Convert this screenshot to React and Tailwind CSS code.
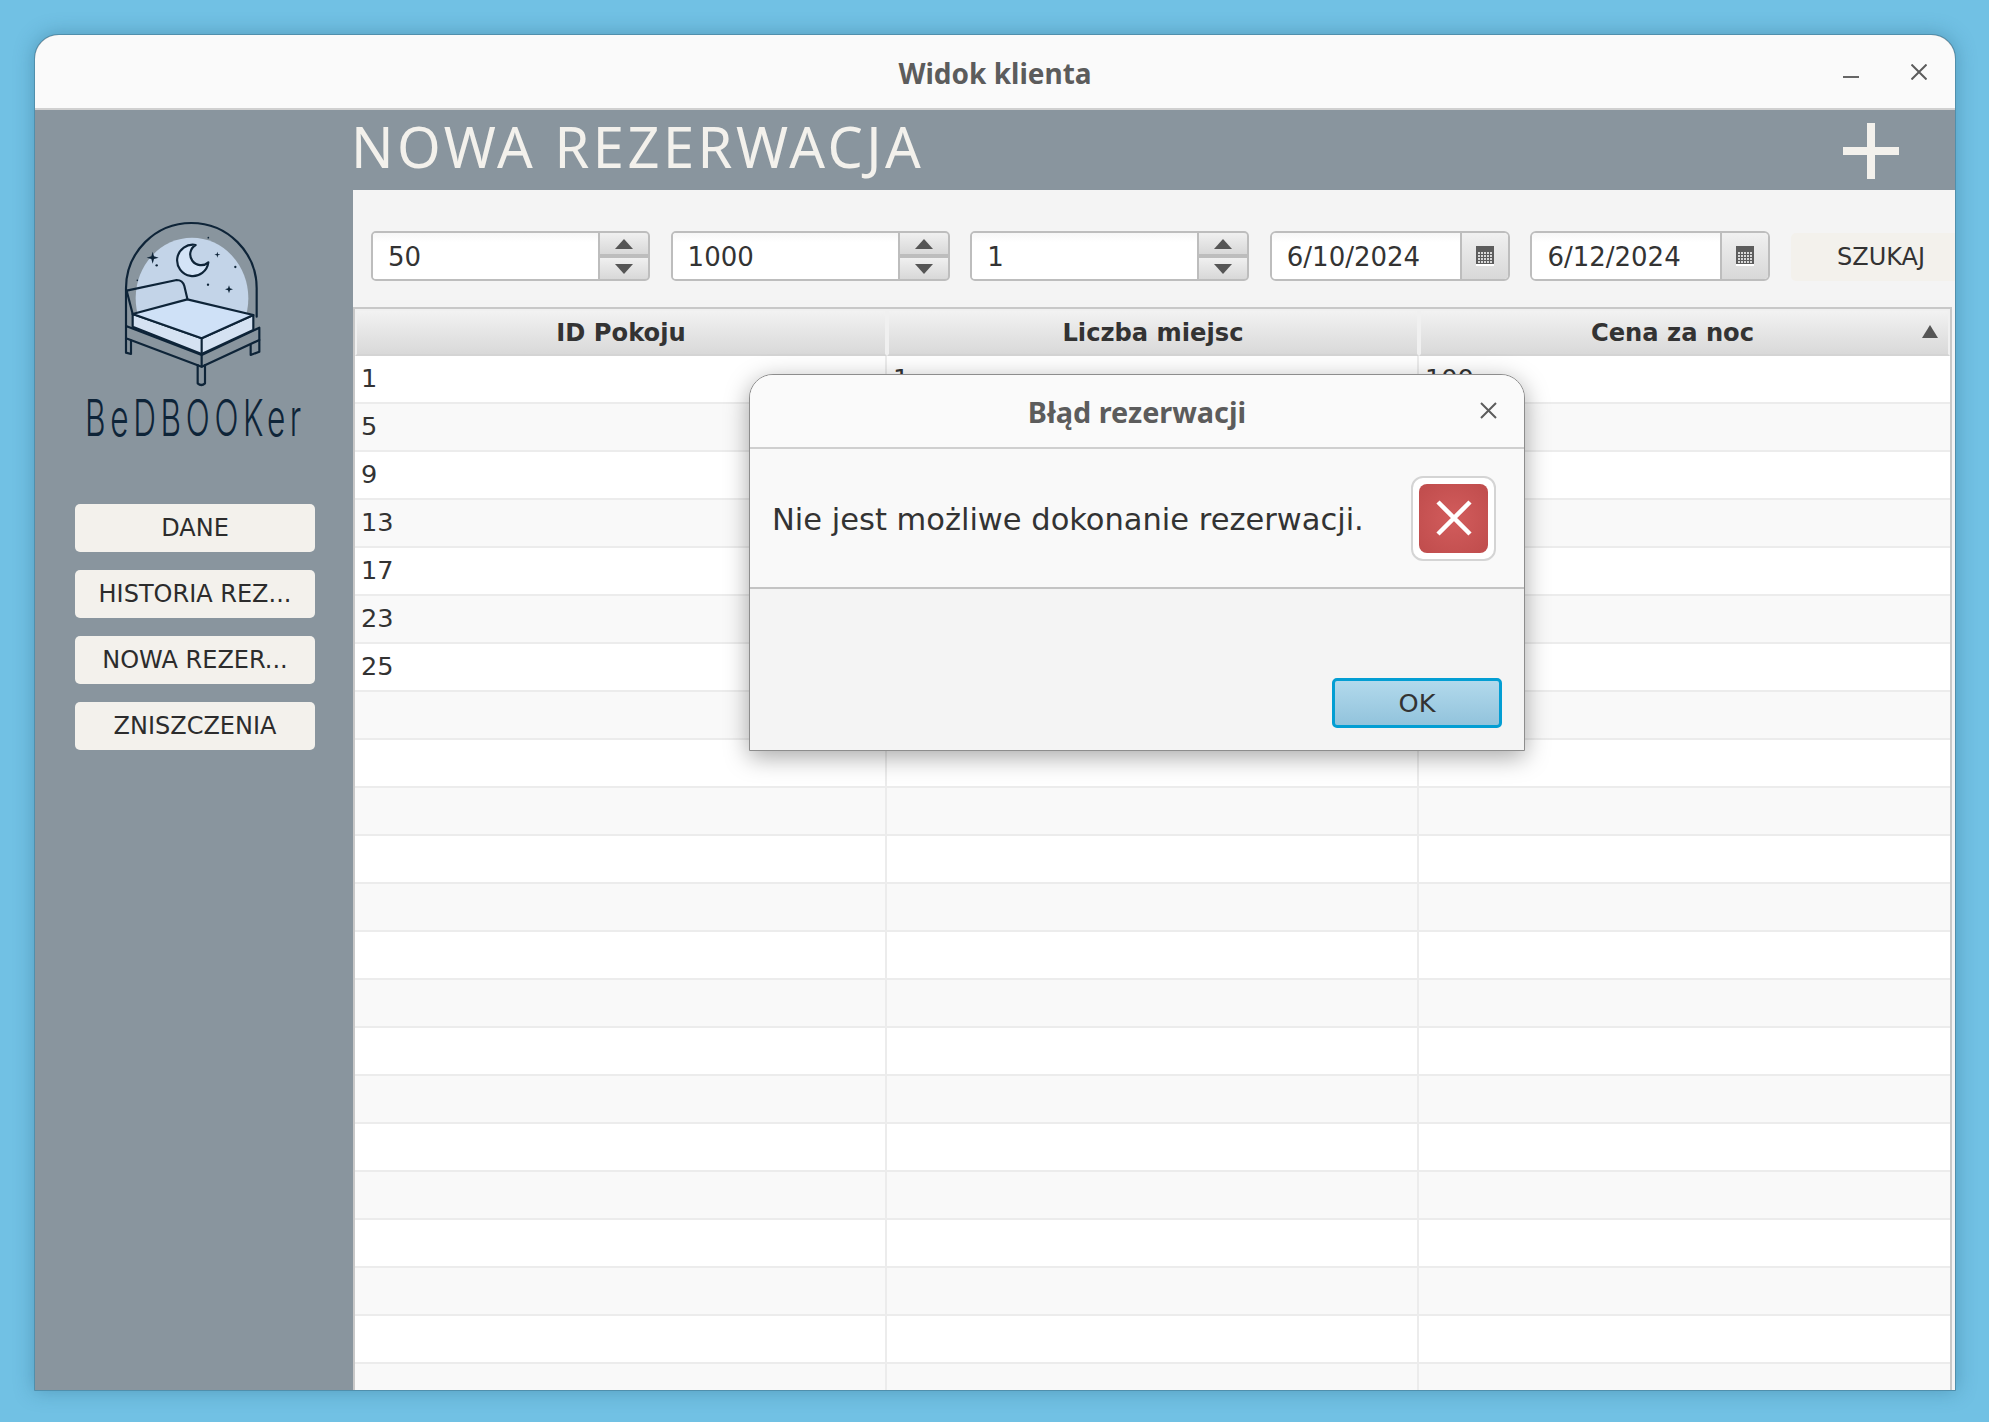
import React from "react";

const menu = ["DANE", "HISTORIA REZ...", "NOWA REZER...", "ZNISZCZENIA"];
const rows = Array.from({ length: 22 }, (_, i) => i);
const ids = ["1", "5", "9", "13", "17", "23", "25"];
const spinners = ["50", "1000", "1"];
const dates = ["6/10/2024", "6/12/2024"];

function Logo() {
    return (
        <svg width="240" height="178" viewBox="135 555 720 534" className="block" fill="none" stroke="#0e2438" strokeWidth="6.5" strokeLinejoin="round" strokeLinecap="round">
            <ellipse cx="486" cy="805" rx="169" ry="182" fill="#c3d4e8" stroke="none" />
            <path d="M288 888 L288 775 A196 196 0 0 1 680 775 L680 860" />
            <path d="M290 782 L440 750 Q458 750 463 768 L472 806" />
            <path d="M290 782 L308 852" />
            <path d="M288 888 L515 975 L688 893 L688 930 L515 1010 L288 925 Z" fill="#89959e" />
            <path d="M308 852 L308 890 L515 972 L670 900 L670 855 L515 925 Z" fill="#d5e2f2" />
            <path d="M308 852 L472 808 L670 855 L515 925 Z" fill="#cfe1f7" />
            <path d="M515 925 L515 1010" />
            <path d="M288 925 L288 968 L303 972 L303 932" />
            <path d="M503 1005 L503 1060 Q514 1070 525 1060 L525 1005" />
            <path d="M662 945 L662 975 L688 965 L688 930" />
            <path d="M497 645 A47 47 0 1 0 535 697 A32.4 32.4 0 1 1 497 645 Z" fill="#d4e4f7" />
            <g fill="#0e2438" stroke="none">
                <path d="M368 665 L372 679 L386 683 L372 687 L368 701 L364 687 L350 683 L364 679 Z" />
                <path d="M597 766 L600 775 L609 778 L600 781 L597 790 L594 781 L585 778 L594 775 Z" />
                <path d="M562 665 L564 672 L571 674 L564 676 L562 683 L560 676 L553 674 L560 672 Z" />
                <circle cx="380" cy="706" r="3.5" />
                <circle cx="616" cy="711" r="3.5" />
                <circle cx="534" cy="764" r="3.5" />
                <circle cx="535" cy="623" r="2.5" />
                <circle cx="322" cy="751" r="2.5" />
            </g>
        </svg>
    );
}

function SpinButton({ up }) {
    return (
        <div className="flex-1 flex items-center justify-center bg-gradient-to-b from-[#f0f0f0] to-[#d8d8d8]">
            <svg width="18" height="10" viewBox="0 0 18 10">
                <path d={up ? "M9 0 L18 10 L0 10 Z" : "M0 0 L18 0 L9 10 Z"} fill="#555555" />
            </svg>
        </div>
    );
}

function CalendarIcon() {
    return (
        <svg width="18" height="20" viewBox="0 0 18 20">
            <rect width="18" height="20" fill="#5c5c5c" />
            <rect y="18" width="18" height="2" fill="#ffffff" />
            <g fill="#d8d8d8">
                {[6, 9, 12, 15].map((y) => [2, 5, 8, 11, 14].map((x) => <rect key={x + "-" + y} x={x} y={y} width="2" height="2" />))}
            </g>
        </svg>
    );
}

function Spinner({ value }) {
    return (
        <div className="shrink-0 flex w-[279px] h-[50px] border-2 border-[#bdbdbd] rounded-[5px] overflow-hidden bg-white text-[26px]">
            <div className="flex-1 flex items-center pl-[15px] pt-[2px] bg-gradient-to-b from-[#f6f6f6] to-white to-[20%]">{value}</div>
            <div className="w-[50px] flex flex-col gap-[4px] bg-[#bdbdbd] border-l-2 border-[#bdbdbd]">
                <SpinButton up />
                <SpinButton />
            </div>
        </div>
    );
}

function DateField({ value }) {
    return (
        <div className="shrink-0 flex w-[240px] h-[50px] border-2 border-[#bdbdbd] rounded-[6px] overflow-hidden bg-white text-[26px]">
            <div className="flex-1 flex items-center pl-[15px] pt-[2px] bg-gradient-to-b from-[#f6f6f6] to-white to-[20%]">{value}</div>
            <div className="w-[48px] flex items-center justify-center border-l-2 border-[#bdbdbd] bg-gradient-to-b from-[#f0f0f0] to-[#d8d8d8]">
                <CalendarIcon />
            </div>
        </div>
    );
}

function HeaderCell({ label, className, children }) {
    return (
        <div className={`relative flex items-center justify-center h-full pt-[2px] border-2 border-[#f0f0f0] border-b-[#d4d4d4] bg-gradient-to-b from-[#f2f2f2] to-[#d9d9d9] font-bold text-[24.2px] ${className}`}>
            {label}
            {children}
        </div>
    );
}

function ErrorDialog() {
    return (
        <div className="absolute left-[714px] top-[339px] w-[776px] h-[377px] flex flex-col bg-[#f4f4f4] border border-[#8d8d8d] rounded-t-[24px] shadow-[0_6px_24px_rgba(0,0,0,0.35)] overflow-hidden">
            <div className="relative h-[74px] flex items-center justify-center bg-[#fafafa] border-b-2 border-[#cfcfcf] shrink-0">
                <span className="font-['Noto_Sans'] font-bold text-[28.8px] text-[#5c5c5c] mt-[1px]">Błąd rezerwacji</span>
                <svg className="absolute left-[730px] top-[27px]" width="17" height="17" viewBox="0 0 17 17" stroke="#5c5c5c" strokeWidth="2">
                    <path d="M1 1 L16 16 M16 1 L1 16" />
                </svg>
            </div>
            <div className="h-[140px] shrink-0 flex items-center justify-between pl-[22px] pr-[28px] bg-[#f9f9f9] border-b-2 border-[#c4c4c4]">
                <span className="text-[#333333] text-[30.5px] mt-[4px]">Nie jest możliwe dokonanie rezerwacji.</span>
                <div className="w-[85px] h-[85px] p-[6px] bg-white border-2 border-[#d4d4d4] rounded-[12px]">
                    <div className="w-full h-full flex items-center justify-center rounded-[8px] bg-[radial-gradient(circle,#d25c5c,#bf4c4c)]">
                        <svg width="36" height="36" viewBox="0 0 36 36" stroke="#ffffff" strokeWidth="4.5">
                            <path d="M2 2 L34 34 M34 2 L2 34" />
                        </svg>
                    </div>
                </div>
            </div>
            <div className="flex-1 flex items-end justify-end pr-[22px] pb-[22px]">
                <div className="w-[170px] h-[50px] flex items-center justify-center rounded-[5px] border-[3px] border-[#039ed3] bg-gradient-to-b from-[#b2d9ec] to-[#92c3dc] text-[#333333]">OK</div>
            </div>
        </div>
    );
}

export default function App() {
    return (
        <div className="h-[1422px] overflow-hidden bg-[#71c1e4] pt-[34px] pl-[34px] font-['DejaVu_Sans',sans-serif] text-[25.6px] text-[#333333]">
            <div className="relative w-[1922px] h-[1357px] flex flex-col border border-[#508fac] rounded-t-[24px] shadow-[0_0_20px_rgba(30,80,110,0.35)] bg-[#89959e]">
                {/* title bar */}
                <div className="relative h-[75px] shrink-0 flex items-center justify-center bg-[#fafafa] border-b-2 border-[#d0d0d0] rounded-t-[24px]">
                    <span className="font-['Noto_Sans'] font-bold text-[28px] text-[#5c5c5c] mt-[3px]">Widok klienta</span>
                    <div className="absolute left-[1808px] top-[41px] w-[16px] h-[2px] bg-[#666666]" />
                    <svg className="absolute left-[1876px] top-[29px]" width="16" height="16" viewBox="0 0 16 16" stroke="#5c5c5c" strokeWidth="2">
                        <path d="M0.5 0.5 L15.5 15.5 M15.5 0.5 L0.5 15.5" />
                    </svg>
                </div>

                <div className="flex-1 flex min-h-0">
                    {/* sidebar */}
                    <div className="w-[318px] shrink-0 flex flex-col pt-[105px] pl-[40px]">
                        <Logo />
                        <div className="mt-[3px] ml-[10px] w-[217px] h-[44px] leading-[44px] whitespace-nowrap origin-left scale-x-[0.62] font-['Inter'] font-light text-[51px] tracking-[7.5px] text-[#0e2438]">BeDBOOKer</div>
                        <div className="mt-[64px] w-[240px] flex flex-col gap-[18px]">
                            {menu.map((item) => (
                                <div key={item} className="h-[48px] flex items-center justify-center rounded-[5px] bg-[#f3f1ec] text-[24px] text-[#2c2c2c]">{item}</div>
                            ))}
                        </div>
                    </div>

                    <div className="flex-1 min-w-0 flex flex-col">
                        <div className="h-[80px] shrink-0 flex items-center justify-between pr-[56px]">
                            <span className="font-['Noto_Sans'] text-[56px] tracking-[3.5px] text-[#f3f1ec] -mt-[8px] -ml-[2px]">NOWA REZERWACJA</span>
                            <svg className="mt-[2px]" width="56" height="56" viewBox="0 0 56 56" fill="#f3f1ec">
                                <path d="M24 0 H32 V24 H56 V32 H32 V56 H24 V32 H0 V24 H24 Z" />
                            </svg>
                        </div>

                        <div className="flex-1 min-h-0 flex flex-col bg-[#f4f4f4] overflow-hidden">
                            {/* filters */}
                            <div className="shrink-0 flex items-center pt-[41px] pl-[18px] gap-[20.6px]">
                                <Spinner value={spinners[0]} />
                                <Spinner value={spinners[1]} />
                                <Spinner value={spinners[2]} />
                                <DateField value={dates[0]} />
                                <DateField value={dates[1]} />
                                <div className="shrink-0 w-[180px] h-[48px] mt-[2px] flex items-center pl-[46px] rounded-[5px] bg-[#f3f1ec] text-[24px]">SZUKAJ</div>
                            </div>

                            {/* table */}
                            <div className="mt-[26px] mr-[3px] flex-1 min-h-0 flex flex-col border-x-2 border-t-2 border-[#c8c8c8] bg-white overflow-hidden">
                                <div className="h-[47px] shrink-0 flex">
                                    <HeaderCell label="ID Pokoju" className="w-[532px]" />
                                    <HeaderCell label="Liczba miejsc" className="w-[532px]" />
                                    <HeaderCell label="Cena za noc" className="flex-1 pr-[24px]">
                                        <svg className="absolute right-[10px] top-[14px]" width="16" height="13" viewBox="0 0 16 13">
                                            <path d="M8 0 L16 13 L0 13 Z" fill="#555555" />
                                        </svg>
                                    </HeaderCell>
                                </div>
                                {rows.map((i) => (
                                    <div key={i} className={`h-[48px] shrink-0 flex border-b-2 border-[#ececec] ${i % 2 == 0 ? "bg-white" : "bg-[#f9f9f9]"}`}>
                                        <div className="w-[532px] flex items-center pl-[6px] pb-[2px] border-r-2 border-[#ececec]">{ids[i]}</div>
                                        <div className="w-[532px] flex items-center pl-[6px] pb-[2px] border-r-2 border-[#ececec]">{i == 0 && "1"}</div>
                                        <div className="flex-1 flex items-center pl-[6px] pb-[2px]">{i == 0 && "100"}</div>
                                    </div>
                                ))}
                            </div>
                        </div>
                    </div>
                </div>

                <ErrorDialog />
            </div>
        </div>
    );
}
